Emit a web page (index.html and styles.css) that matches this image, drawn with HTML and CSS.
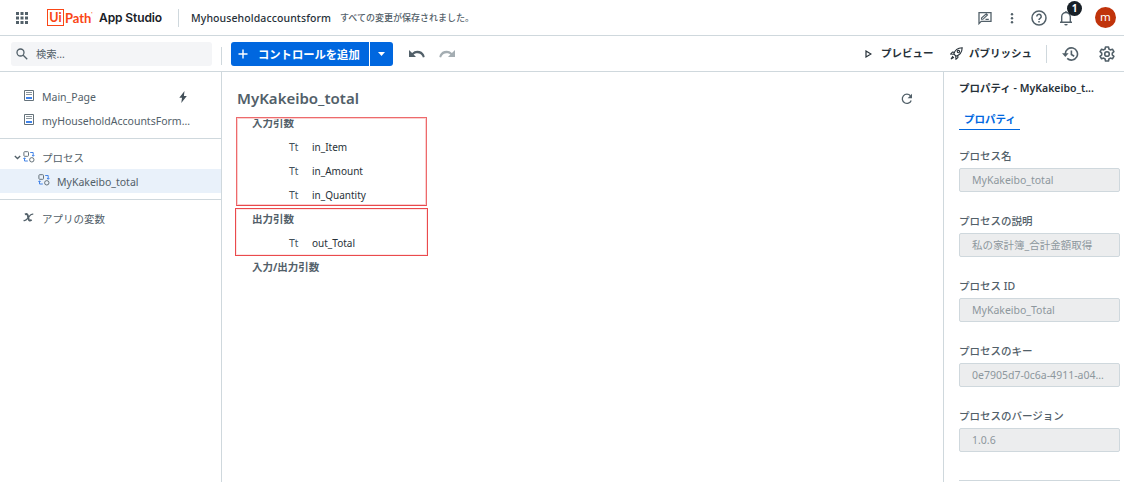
FILE: index.html
```html
<!DOCTYPE html>
<html lang="ja">
<head>
<meta charset="utf-8">
<title>App Studio</title>
<link rel="stylesheet" href="styles.css">
</head>
<body>
<svg class="defs" width="0" height="0">
  <symbol id="page" viewBox="0 0 10 12"><path d="M.5.5h9v10H.5z" fill="#fff" stroke="#65727a" stroke-width="1"/><path d="M2 2.500h6M2 4.500h6" stroke="#8a959c" stroke-width="1"/><path d="M2 7h6v2H2z" fill="#3f83ea"/></symbol>
  <symbol id="process" viewBox="0 0 12 12"><rect x=".9" y=".7" width="4.600" height="4.600" rx=".8" fill="none" stroke="#65727a"/><circle cx="8.800" cy="8.800" r="2.200" fill="none" stroke="#65727a"/><path d="M7.200 1.500h3v3.600M9 4l1.200 1.300L11.400 4M4.800 10H1.500V6.800M.4 8l1.100-1.200L2.600 8" fill="none" stroke="#4384e8"/></symbol>
</svg>
<div class="app">
  <header class="header">
    <svg class="grid-icon" width="12" height="12" viewBox="0 0 12 12" fill="#526069"><path d="M0 0h3v3H0zM4.500 0h3v3h-3zM9 0h3v3H9zM0 4.500h3v3H0zM4.500 4.500h3v3h-3zM9 4.500h3v3H9zM0 9h3v3H0zM4.500 9h3v3h-3zM9 9h3v3H9z"/></svg>
    <div class="logo"><span class="logo-box">Ui</span><span class="logo-path">Path</span><span class="logo-mark">'</span></div>
    <div class="product">App Studio</div>
    <div class="header-rule"></div>
    <div class="app-name">Myhouseholdaccountsform</div>
    <div class="save-state">すべての変更が保存されました。</div>
    <div class="header-icons">
      <svg width="14" height="14" viewBox="0 0 14 14" fill="none" stroke="#526069" stroke-width="1.300"><path d="M1 12.600V1.700h12v8.700H3.200z"/><path d="M3.500 8.300V7l4.800-4.200 1.200 1.200-4.600 4.300zM7.500 8.400h3.300" stroke-width="1.100"/></svg>
      <svg width="4" height="12" viewBox="0 0 4 12" fill="#526069"><circle cx="2" cy="2.200" r="1.200"/><circle cx="2" cy="6.200" r="1.200"/><circle cx="2" cy="10.200" r="1.200"/></svg>
      <svg width="16" height="16" viewBox="0 0 16 16" fill="none" stroke="#526069" stroke-width="1.500"><circle cx="8" cy="8" r="7"/><path d="M5.800 6.400a2.200 2.200 0 1 1 3.500 1.800C8.400 8.800 8 9 8 10"/><path d="M8 11v1.500"/></svg>
      <div class="bell">
        <svg width="14" height="16" viewBox="0 0 14 16"><path d="M1 12.300h12M2.700 12V6.800a4.300 4.300 0 0 1 8.600 0V12M7 2.500V1" fill="none" stroke="#526069" stroke-width="1.400"/><path d="M5.300 14h3.400a1.700 1.500 0 0 1-3.400 0" fill="#526069"/></svg>
        <span class="badge">1</span>
      </div>
      <div class="avatar">m</div>
    </div>
  </header>
  <div class="toolbar">
    <div class="search">
      <svg width="12" height="12" viewBox="0 0 12 12" fill="none" stroke="#526069" stroke-width="1.300"><circle cx="4.500" cy="4.500" r="3.500"/><path d="M7.200 7.200l4 4"/></svg>
      <span>検索...</span>
    </div>
    <div class="search-rule"></div>
    <div class="add-button">
      <div class="add-main"><svg width="10" height="10" viewBox="0 0 10 10" stroke="#fff" stroke-width="1.400"><path d="M5 .5v9M.5 5h9"/></svg><span>コントロールを追加</span></div>
      <div class="add-drop"><svg width="7" height="4" viewBox="0 0 7 4" fill="#fff"><path d="M0 0h7L3.500 4z"/></svg></div>
    </div>
    <svg class="undo" width="16" height="8" viewBox="0 0 16 8"><path d="M0 0v7h7L4.600 4.600a5.700 5.700 0 0 1 9.300 2.800l1.800-.5A7.300 7.300 0 0 0 3.100 3.100z" fill="#526069"/></svg>
    <svg class="redo" width="16" height="8" viewBox="0 0 16 8"><path d="M16 0v7H9l2.400-2.400a5.700 5.700 0 0 0-9.300 2.800L.3 6.900a7.300 7.300 0 0 1 12.600-3.800z" fill="#a4adb2"/></svg>
    <div class="actions">
      <svg width="7" height="8" viewBox="0 0 7 8" fill="none" stroke="#273139" stroke-width="1.200"><path d="M1 1l5 3-5 3z"/></svg>
      <span class="preview">プレビュー</span>
      <svg width="13" height="13" viewBox="0 0 13 13" fill="none" stroke="#273139" stroke-width="1.100"><path d="M3.800 7c1-3.500 3.800-6 8.400-6.200C12 5.300 9.500 8.200 6 9.200zM4.500 5.200L2.500 5 .8 7l3 .2M7.800 8.600l.1 2L6 12.200l-.3-3M3 9L1 12l3-1.800"/><circle cx="8.400" cy="4.600" r="1.200"/></svg>
      <span class="publish">パブリッシュ</span>
      <div class="action-rule"></div>
      <svg class="history" width="17" height="14" viewBox="0 0 17 14" fill="none" stroke="#526069" stroke-width="1.600"><path d="M3.300 7a6.100 6.100 0 1 1 1.900 4.400M9.400 3.600v3.900l2.800 1.700"/><path d="M0 6.300h6.600L3.300 9.900z" fill="#526069" stroke="none"/></svg>
      <svg class="gear" width="16" height="16" viewBox="0 0 16 16" fill="none" stroke="#526069" stroke-width="1.600" stroke-linejoin="round"><path d="M6.500 1h3l.4 2 1.500.9 2-.7 1.500 2.500-1.600 1.400v1.800l1.600 1.400-1.500 2.500-2-.7-1.500.9-.4 2h-3l-.4-2-1.500-.9-2 .7-1.500-2.500 1.600-1.400V7.100L1.100 5.700l1.500-2.500 2 .7L6.100 3z"/><circle cx="8" cy="8" r="2.300"/></svg>
    </div>
  </div>
  <div class="workspace">
    <nav class="sidebar">
      <div class="nav-pages">
        <div class="nav-row"><svg width="10" height="12"><use href="#page"/></svg><span class="page-name">Main_Page</span><svg class="bolt" width="8" height="12" viewBox="0 0 8 12"><path d="M5.500 0L.3 6.700h2.700L2.300 12l5.500-7H4.900z" fill="#435059"/></svg></div>
        <div class="nav-row"><svg width="10" height="12"><use href="#page"/></svg><span class="page-name long">myHouseholdAccountsForm...</span></div>
      </div>
      <div class="nav-processes">
        <div class="nav-row process-head"><svg class="chevron" width="7" height="5" viewBox="0 0 7 5"><path d="M.8 1l2.700 2.500L6.200 1" fill="none" stroke="#526069" stroke-width="1.300"/></svg><svg width="12" height="12"><use href="#process"/></svg><span>プロセス</span></div>
        <div class="nav-row selected"><svg width="12" height="12"><use href="#process"/></svg><span class="process-name">MyKakeibo_total</span></div>
      </div>
      <div class="nav-row variables"><svg class="var-icon" width="11" height="9" viewBox="0 0 11 9" fill="none" stroke="#526069"><path d="M2 1.600C3.600.4 4.400 1 4.800 2.600l.8 3.400c.4 1.900 1.300 2.200 3 .8" stroke-width="1.900"/><path d="M10.300 1.300C7.800.4 6.600 3 5.400 4.500S3 8.300.6 7.400" stroke-width="1.200"/></svg><span>アプリの変数</span></div>
    </nav>
    <main class="content">
      <div class="content-head">
        <h1>MyKakeibo_total</h1>
        <svg width="12" height="12" viewBox="0 0 12 12"><path d="M10.200 7.500A4.600 4.600 0 1 1 9.400 2.800" fill="none" stroke="#526069" stroke-width="1.300"/><path d="M11 .8v4.400H6.600z" fill="#526069"/></svg>
      </div>
      <div class="arguments">
        <div class="group">入力引数</div>
        <div class="argument"><span class="tt">T<small>t</small></span><span>in_Item</span></div>
        <div class="argument"><span class="tt">T<small>t</small></span><span>in_Amount</span></div>
        <div class="argument"><span class="tt">T<small>t</small></span><span>in_Quantity</span></div>
        <div class="group">出力引数</div>
        <div class="argument"><span class="tt">T<small>t</small></span><span>out_Total</span></div>
        <div class="group">入力/出力引数</div>
        <div class="mark mark-in"></div>
        <div class="mark mark-out"></div>
      </div>
    </main>
    <aside class="properties">
      <h2>プロパティ - MyKakeibo_t...</h2>
      <div class="tab">プロパティ</div>
      <div class="fields">
        <div class="field"><label>プロセス名</label><div class="input">MyKakeibo_total</div></div>
        <div class="field"><label>プロセスの説明</label><div class="input">私の家計簿_合計金額取得</div></div>
        <div class="field"><label>プロセス ID</label><div class="input">MyKakeibo_Total</div></div>
        <div class="field"><label>プロセスのキー</label><div class="input">0e7905d7-0c6a-4911-a04...</div></div>
        <div class="field"><label>プロセスのバージョン</label><div class="input">1.0.6</div></div>
      </div>
      <div class="end-rule"></div>
    </aside>
  </div>
</div>
</body>
</html>
```
FILE: styles.css
```css
* { box-sizing: border-box; }
body { margin: 0; overflow: hidden; background: #fff; color: #526069; font: 10.5px/16px "Noto Sans", "Noto Sans CJK JP", sans-serif; }
svg { display: block; flex: none; }
span, label, h1, h2 { white-space: nowrap; }
.defs { position: absolute; }
.app { width: 1124px; height: 482px; display: flex; flex-direction: column; }

.header { height: 36px; flex: none; display: flex; align-items: center; border-bottom: 1px solid #cfd8dd; padding-left: 16px; }
.logo { margin-left: 19px; width: 52px; display: flex; align-items: center; color: #fa4616; font: 700 13px/14px Lato, sans-serif; }
.logo-box { width: 17px; height: 17px; border: 1.500px solid #fa4616; text-align: center; line-height: 15px; font-size: 12.500px; }
.logo-path { margin-left: 1px; letter-spacing: -.1px; }
.logo-mark { font-size: 6px; margin-top: -7px; }
.product { width: 63px; font: 600 12px/16px Inter, sans-serif; color: #182027; letter-spacing: -.1px; white-space: nowrap; }
.header-rule { width: 1px; height: 18px; background: #cfd8dd; margin-left: 16px; }
.app-name { width: 140px; margin-left: 12px; font-weight: 500; font-size: 10.5px; color: #273139; letter-spacing: .1px; white-space: nowrap; padding-top: 1px; }
.save-state { margin-left: 9px; font-size: 9px; font-weight: 500; white-space: nowrap; padding-top: 1px; }
.header-icons { margin-left: auto; display: flex; align-items: center; padding-right: 8px; }
.header-icons > :nth-child(2) { margin-left: 18px; }
.header-icons > :nth-child(3) { margin-left: 17px; }
.bell { position: relative; margin-left: 12px; }
.badge { position: absolute; left: 8px; top: -9px; width: 15px; height: 15px; border-radius: 50%; background: #182027; color: #fff; font-weight: 700; font-size: 10px; line-height: 15px; text-align: center; }
.avatar { width: 21px; height: 21px; margin-left: 22px; border-radius: 50%; background: #c0330b; color: #fff; font-size: 11.500px; line-height: 20px; text-align: center; }

.toolbar { height: 36px; flex: none; display: flex; align-items: center; border-bottom: 1px solid #cfd8dd; padding-left: 11px; }
.search { width: 201px; height: 24px; border-radius: 3px; background: #f4f5f7; display: flex; align-items: center; gap: 8px; padding-left: 5px; font-size: 10.300px; }
.search-rule { width: 1px; height: 18px; background: #cfd8dd; margin: 4px 0 0 9px; }
.add-button { display: flex; height: 24px; margin-left: 9px; color: #fff; }
.add-main { width: 138px; display: flex; align-items: center; gap: 10px; padding-left: 7px; background: #0067df; border-radius: 3px 0 0 3px; font-weight: 700; font-size: 11.300px; }
.add-main span { padding-top: 2px; }
.add-drop { width: 23px; margin-left: 1px; background: #0067df; border-radius: 0 3px 3px 0; display: flex; align-items: center; justify-content: center; }
.undo { margin-left: 16px; }
.redo { margin-left: 14px; }
.actions { margin-left: auto; padding-right: 9px; display: flex; align-items: center; color: #273139; font-weight: 700; }
.actions span { padding-bottom: 2px; }
.preview { width: 52px; margin-left: 9px; }
.publish { width: 63px; margin-left: 6px; }
.actions svg:nth-of-type(2) { margin-left: 17px; }
.action-rule { width: 1px; height: 18px; background: #cfd8dd; margin: 1px 0 0 14px; }
.history { margin-left: 15px; }
.gear { margin-left: 20px; }

.workspace { flex: 1; min-height: 0; display: flex; }
.sidebar { width: 222px; flex: none; border-right: 1px solid #cfd8dd; font-size: 10.500px; }
.nav-row { height: 24px; display: flex; align-items: center; }
.nav-pages { height: 67px; padding: 13px 0 0 24px; border-bottom: 1px solid #cfd8dd; }
.nav-pages svg:first-child { margin-top: -2px; }
.page-name { width: 137px; margin-left: 8px; }
.nav-processes { height: 61px; padding-top: 6px; border-bottom: 1px solid #cfd8dd; }
.process-head { padding-left: 14px; gap: 2px; }
.process-head span { margin-left: 5px; padding-top: 2px; }
.selected { padding-left: 38px; gap: 7px; background: #e9f1fa; }
.selected svg { margin-top: -2px; }
.process-name { padding-top: 2px; }
.variables { margin-top: 7px; padding-left: 23px; }
.var-icon { margin: -3px 8px 0 0; }

.content { width: 721px; flex: none; padding: 15px 30px 0 15px; }
.content-head { height: 24px; display: flex; align-items: center; justify-content: space-between; }
h1 { margin: 0; font-size: 15px; font-weight: 600; line-height: 22px; padding-bottom: 2px; }
.arguments { position: relative; color: #273139; font-size: 10px; }
.group { height: 24px; line-height: 24px; padding-left: 15px; font-size: 10.500px; font-weight: 700; color: #526069; }
.argument { height: 24px; display: flex; align-items: center; padding-left: 52px; }
.tt { width: 23px; font: 10.500px/16px "Noto Sans"; color: #435059; }
.tt small { font-size: 10px; }
.mark { position: absolute; border: 1px solid #ea4a4d; }
.mark-in { left: -1px; top: 6px; width: 191px; height: 89px; border: 1px solid #ed6a6c; border-bottom-color: #e8484c; box-shadow: inset 0 0 0 1px #fbd0d0; }
.mark-out { left: -2px; top: 97px; width: 193px; height: 48px; box-shadow: inset 0 0 0 1px #fde6e6; }

.properties { flex: 1; border-left: 1px solid #cfd8dd; padding: 8px 4px 0 15px; }
h2 { margin: 0; font-size: 10.500px; font-weight: 600; line-height: 16px; color: #273139; }
.tab { width: 61px; height: 22px; margin-top: 12px; padding-left: 5px; line-height: 22px; border-bottom: 1px solid #0067df; color: #0067df; font-weight: 700; font-size: 10.500px; }
.fields { padding-top: 18px; }
.field { height: 65px; }
.field label { display: block; height: 20px; line-height: 16px; font-weight: 500; }
.input { height: 24px; padding-left: 12px; line-height: 23px; border: 1px solid #cfd8dd; border-radius: 2px; background: #ecedee; color: #8d979d; white-space: nowrap; font-size: 10.500px; }
.end-rule { height: 1px; background: #cfd8dd; margin-top: 7px; }
```
